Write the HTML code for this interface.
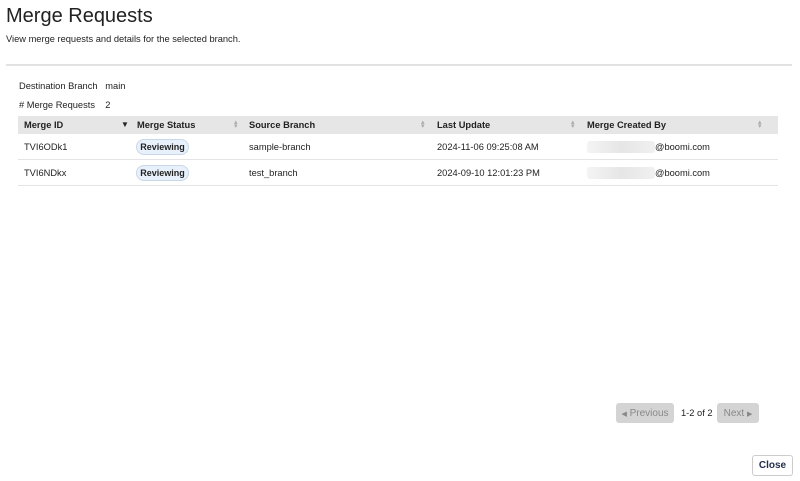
<!DOCTYPE html>
<html><head><style>
*{box-sizing:border-box;margin:0;padding:0}
body{width:800px;height:481px;background:#fff;font-family:"Liberation Sans",sans-serif;color:#222;position:relative;overflow:hidden;font-size:9.3px}
.a{position:absolute;white-space:nowrap}
h1{position:absolute;left:6px;top:5px;font-size:20px;font-weight:normal;color:#222}
.hdr{position:absolute;left:18px;top:116px;width:760px;height:18px;background:#e6e6e6}
.row{position:absolute;left:18px;width:760px;height:26px;border-bottom:1px solid #e4e4e4}
.b{font-weight:bold}
.pill{position:absolute;width:53px;height:16px;border:1px solid #c9d7e6;background:#e8f1fb;border-radius:8px;font-weight:bold;text-align:center;line-height:14px;font-size:9px}
.blur{position:absolute;width:68px;height:12px;background:linear-gradient(90deg,#f4f4f4,#e6e6e6,#f0f0f0);border-radius:3px}
.sort{position:absolute;font-size:7px;color:#aaa;line-height:4px}
.btn{position:absolute;height:20px;border-radius:3px;background:#d4d4d4;color:#888;font-size:10px;line-height:20px;text-align:center}
</style></head><body>
<h1>Merge Requests</h1>
<div class="a" style="left:6px;top:34px">View merge requests and details for the selected branch.</div>
<div class="a" style="left:6px;top:64px;width:786px;height:2px;background:#e2e2e2"></div>
<div class="a" style="left:19px;top:81px">Destination Branch&nbsp;&nbsp; main</div>
<div class="a" style="left:19px;top:100px"># Merge Requests&nbsp;&nbsp;&nbsp; 2</div>
<div class="hdr">
<span class="a b" style="left:6px;top:4px">Merge ID</span><span class="a" style="left:103px;top:4px;font-size:8px">▼</span>
<span class="a b" style="left:119px;top:4px">Merge Status</span><span class="sort" style="left:216px;top:5px">▴<br>▾</span>
<span class="a b" style="left:231px;top:4px">Source Branch</span><span class="sort" style="left:403px;top:5px">▴<br>▾</span>
<span class="a b" style="left:419px;top:4px">Last Update</span><span class="sort" style="left:553px;top:5px">▴<br>▾</span>
<span class="a b" style="left:569px;top:4px">Merge Created By</span><span class="sort" style="left:740px;top:5px">▴<br>▾</span>
</div>
<div class="row" style="top:134px">
<span class="a" style="left:6px;top:8px">TVI6ODk1</span>
<div class="pill" style="left:118px;top:5px">Reviewing</div>
<span class="a" style="left:231px;top:8px">sample-branch</span>
<span class="a" style="left:419px;top:8px">2024-11-06 09:25:08 AM</span>
<div class="blur" style="left:569px;top:7px"></div><span class="a" style="left:637px;top:8px">@boomi.com</span>
</div>
<div class="row" style="top:160px">
<span class="a" style="left:6px;top:8px">TVI6NDkx</span>
<div class="pill" style="left:118px;top:5px">Reviewing</div>
<span class="a" style="left:231px;top:8px">test_branch</span>
<span class="a" style="left:419px;top:8px">2024-09-10 12:01:23 PM</span>
<div class="blur" style="left:569px;top:7px"></div><span class="a" style="left:637px;top:8px">@boomi.com</span>
</div>
<div class="btn" style="left:616px;top:403px;width:58px;line-height:19px;padding-top:1px"><span style="font-size:7px">◀</span> Previous</div>
<div class="a" style="left:681px;top:408px">1-2 of 2</div>
<div class="btn" style="left:717px;top:403px;width:42px;line-height:19px;padding-top:1px">Next <span style="font-size:7px">▶</span></div>
<div class="a b" style="left:752px;top:455px;width:41px;height:21px;border:1px solid #ccc;border-radius:3px;text-align:center;line-height:19px;font-size:10px;color:#1f2d4a">Close</div>
</body></html>
